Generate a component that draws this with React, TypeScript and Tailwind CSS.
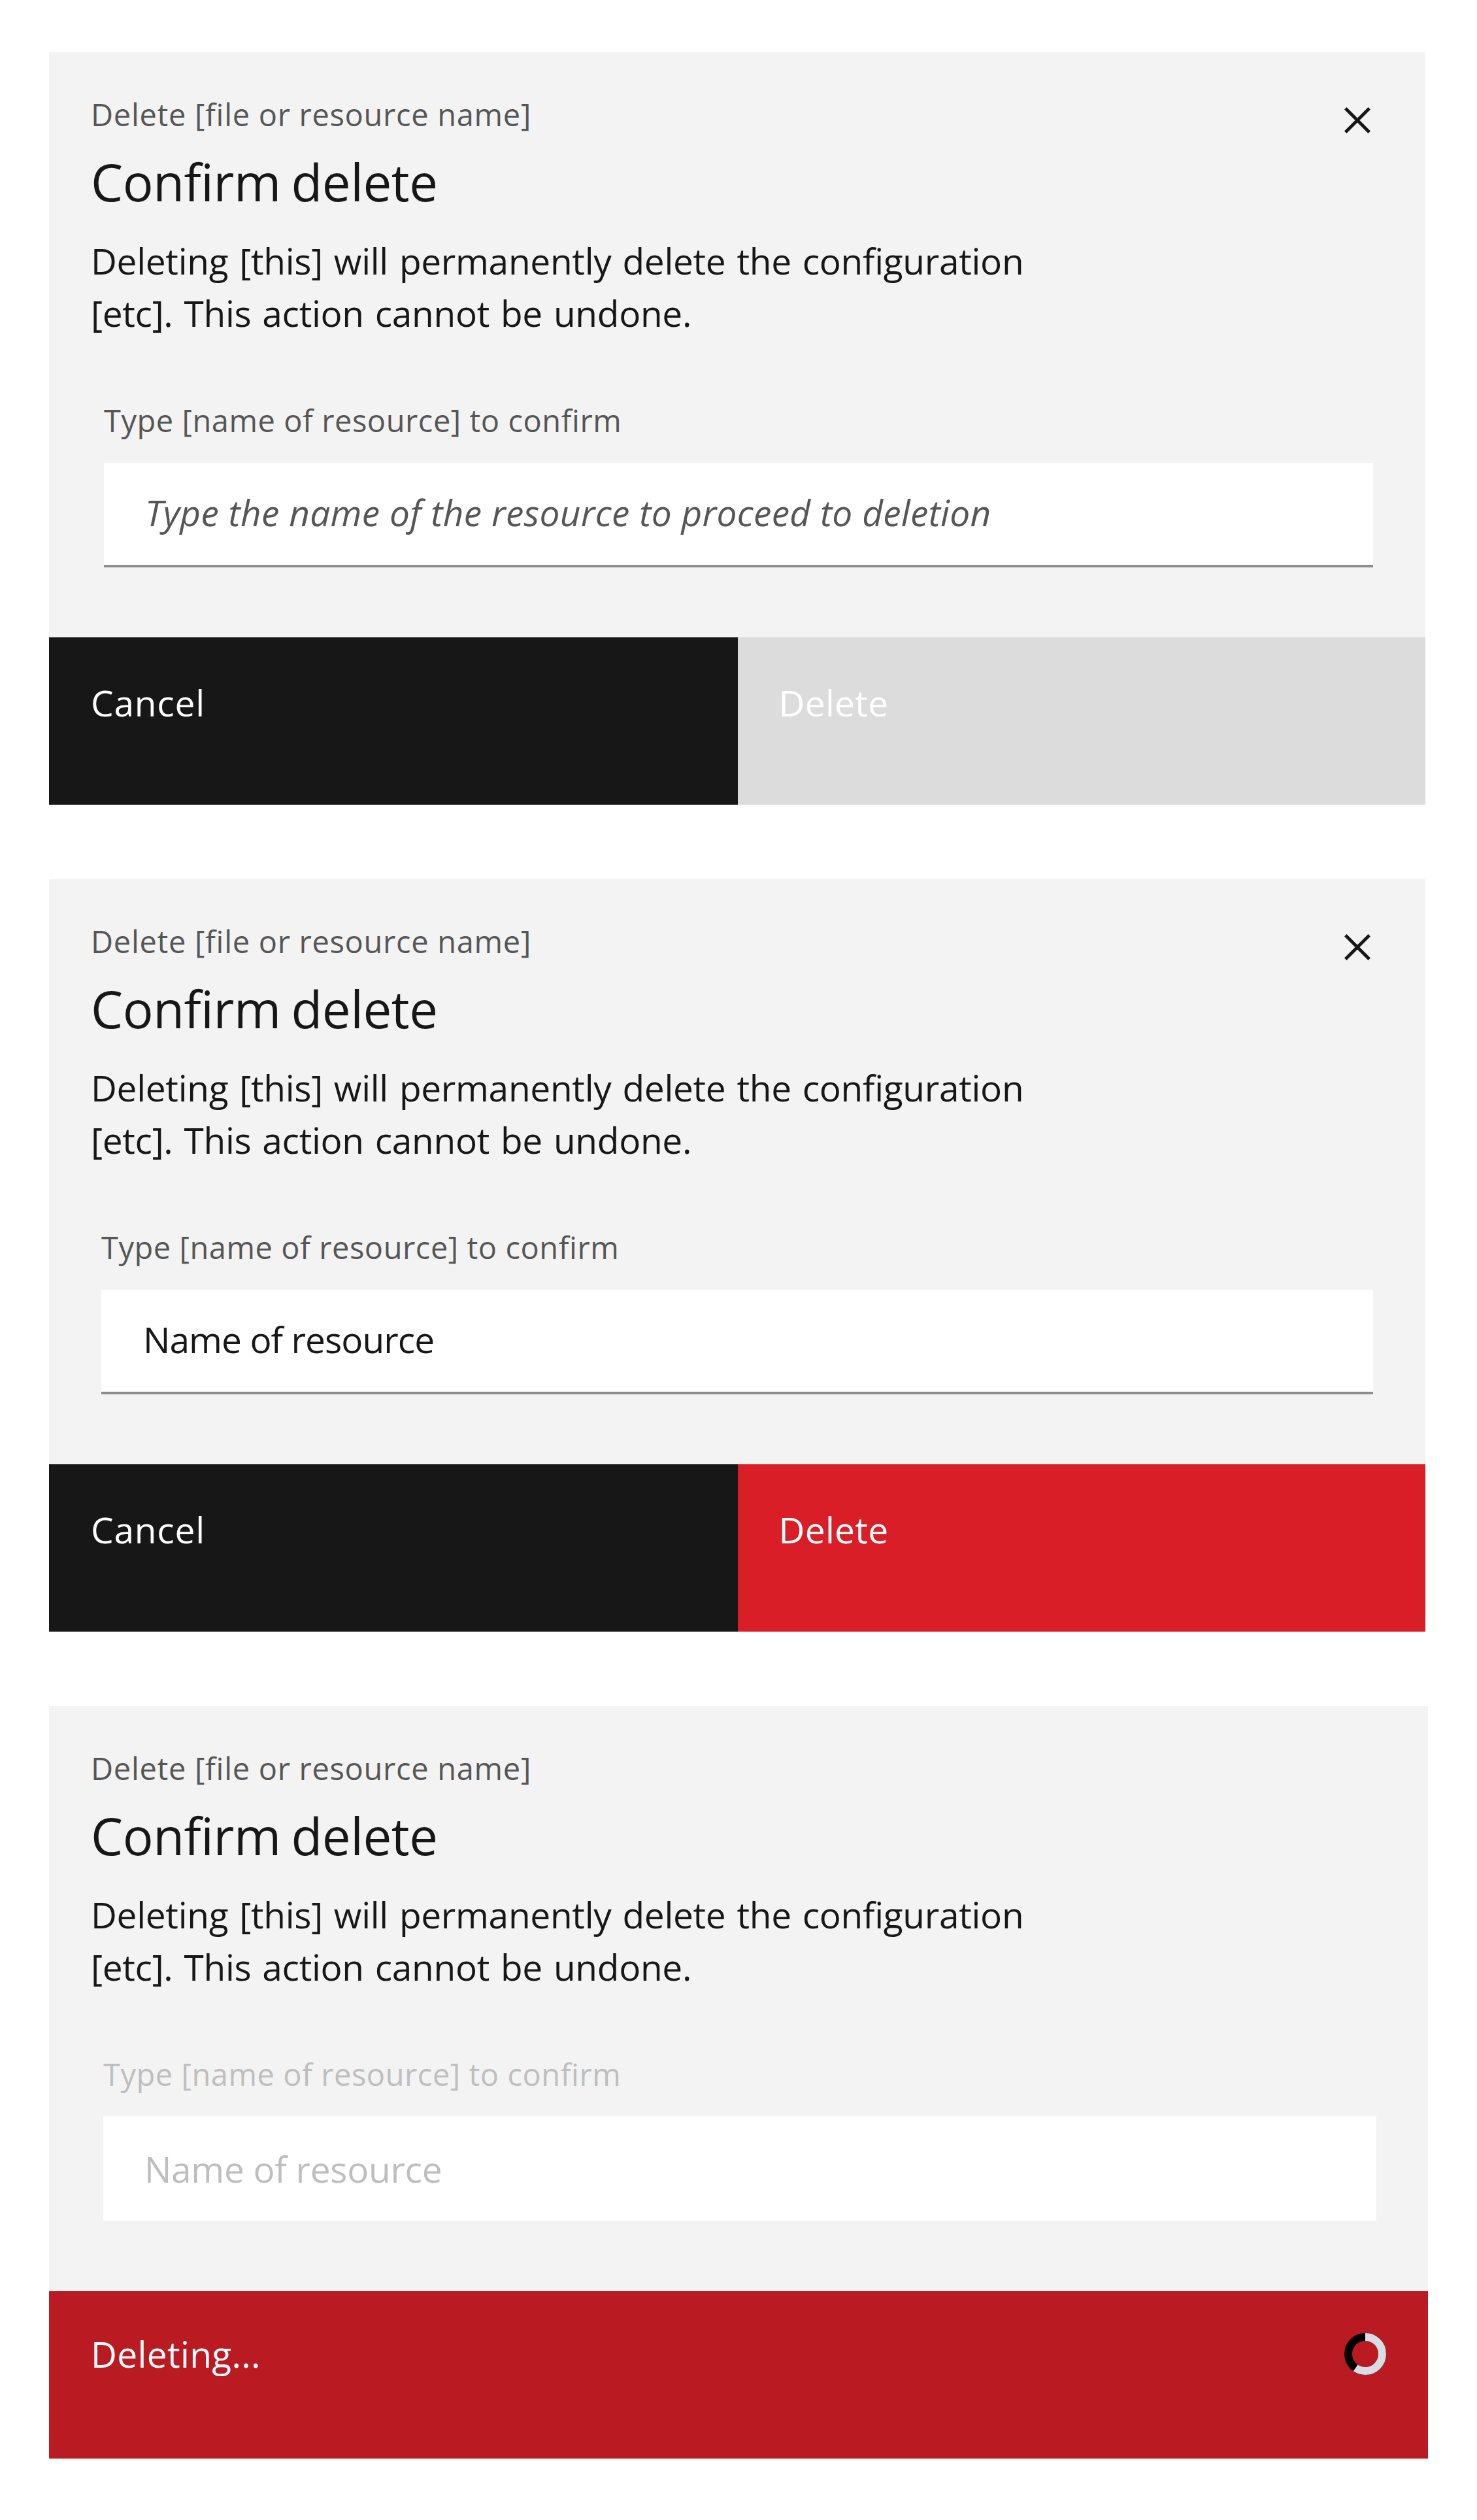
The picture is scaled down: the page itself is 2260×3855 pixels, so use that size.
import type { ReactNode } from "react";

function CloseIcon() {
  return (
    <svg viewBox="0 0 32 32" className="size-20 fill-[#171717]" aria-hidden="true">
      <path d="M24 9.4 22.6 8 16 14.6 9.4 8 8 9.4 14.6 16 8 22.6 9.4 24 16 17.4 22.6 24 24 22.6 17.4 16 24 9.4z" />
    </svg>
  );
}

function Spinner() {
  return (
    <svg viewBox="0 0 64 64" className="size-16 -rotate-90" fill="none" strokeWidth="12" aria-hidden="true">
      <circle cx="32" cy="32" r="26" stroke="#000000" />
      <circle cx="32" cy="32" r="26" stroke="#d8dce3" pathLength="1000" strokeDasharray="597 403" />
    </svg>
  );
}

function Modal({ className, closable, children, footer }: { className: string; closable?: boolean; children: ReactNode; footer: ReactNode }) {
  return (
    <section className={`relative flex flex-col justify-between bg-[#f3f3f3] text-[#171717] ${className}`}>
      <div className="pt-[63px]">
        <header className="pl-16">
          <p className="text-[47px] leading-[64px] tracking-[0.7px] text-[#565656]">Delete [file or resource name]</p>
          <h2 className="mt-[19px] text-[78px] leading-[104px] tracking-[-0.45px] [word-spacing:-4px]">Confirm delete</h2>
          <p className="mt-[29px] text-[55px] leading-[80px] tracking-[-0.3px] [word-spacing:3px]">
            Deleting [this] will permanently delete the configuration
            <br />
            [etc]. This action cannot be undone.
          </p>
        </header>
        {children}
      </div>
      {closable && (
        <button type="button" aria-label="Close" className="absolute top-16 right-16">
          <CloseIcon />
        </button>
      )}
      <footer className="flex h-64 text-[55px] leading-[80px] text-white">{footer}</footer>
    </section>
  );
}

function Field({ className, labelClass, children }: { className: string; labelClass: string; children: ReactNode }) {
  return (
    <div className={`mt-[92px] ${className}`}>
      <div className={`text-[47px] leading-[64px] tracking-[0.55px] ${labelClass}`}>Type [name of resource] to confirm</div>
      {children}
    </div>
  );
}

export default function App() {
  return (
    <main className="flex h-[3855px] w-[2260px] flex-col gap-[114px] bg-white pt-20 pl-[75px] font-['Open_Sans',sans-serif]">
      <Modal
        className="h-[1151px] w-[2106px]"
        closable
        footer={
          <>
            <div className="flex-1 bg-[#171717] pt-[60px] pl-16 tracking-[0.8px]">Cancel</div>
            <div className="flex-1 bg-[#dcdcdc] pt-[60px] pl-[63px] tracking-[0.3px]">Delete</div>
          </>
        }
      >
        <Field className="mr-20 ml-[84px]" labelClass="text-[#565656]">
          <div className="mt-[33px] h-40 border-b-4 border-[#8d8d8d] bg-white pl-[63px] text-[55px] leading-[151px] tracking-[0.28px] text-[#565656] italic">
            Type the name of the resource to proceed to deletion
          </div>
        </Field>
      </Modal>

      <Modal
        className="h-[1151px] w-[2106px]"
        closable
        footer={
          <>
            <div className="flex-1 bg-[#171717] pt-[60px] pl-16 tracking-[0.8px]">Cancel</div>
            <div className="flex-1 bg-[#da1e28] pt-[60px] pl-[63px] tracking-[0.3px]">Delete</div>
          </>
        }
      >
        <Field className="mr-20 ml-20" labelClass="text-[#565656]">
          <div className="mt-[33px] h-40 border-b-4 border-[#8d8d8d] bg-white pl-16 text-[55px] leading-[151px] tracking-[-0.93px]">
            Name of resource
          </div>
        </Field>
      </Modal>

      <Modal
        className="h-[1151px] w-[2110px]"
        footer={
          <div className="flex flex-1 items-start justify-between bg-[#ba1b23] pt-14 pr-16 pl-16">
            <span className="tracking-[0.35px]">Deleting...</span>
            <span className="mt-2">
              <Spinner />
            </span>
          </div>
        }
      >
        <Field className="mr-[79px] ml-[83px]" labelClass="text-[#bebebe]">
          <div className="mt-8 h-40 bg-white pl-[63px] text-[55px] leading-[161px] tracking-[-0.3px] text-[#bebebe]">Name of resource</div>
        </Field>
      </Modal>
    </main>
  );
}
